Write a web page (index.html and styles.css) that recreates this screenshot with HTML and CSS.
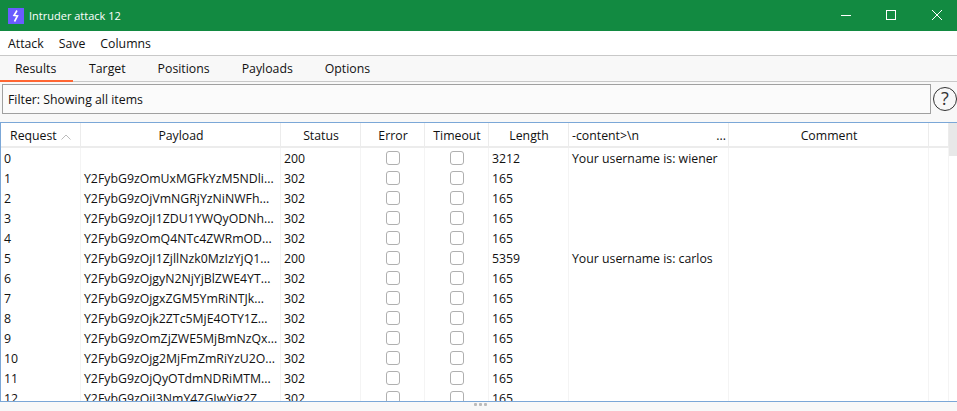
FILE: index.html
```html
<!DOCTYPE html>
<html lang="en">

<head>
    <meta charset="UTF-8">
    <meta name="viewport" content="width=device-width, initial-scale=1.0">
    <title>Intruder attack 12</title>
    <link rel="stylesheet" href="styles.css">
</head>

<body>
    <div class="titlebar">
        <div class="title-left">
            <svg class="app-icon" width="16" height="16" viewBox="0 0 16 16">
                <rect width="16" height="16" fill="#6a5cff"></rect>
                <path d="M9 2.5 L6 7.5 L9.5 8 L6.5 13.5" fill="none" stroke="#fff" stroke-width="1.6"></path>
            </svg>
            <span>Intruder attack 12</span>
        </div>
        <div class="window-buttons">
            <svg width="10" height="10" viewBox="0 0 10 10"><path d="M0 5.5H10" stroke="#fff"></path></svg>
            <svg class="max" width="10" height="10" viewBox="0 0 10 10"><rect x="0.5" y="0.5" width="9" height="9" fill="none" stroke="#fff"></rect></svg>
            <svg width="10" height="10" viewBox="0 0 10 10"><path d="M0 0L10 10M10 0L0 10" stroke="#fff"></path></svg>
        </div>
    </div>

    <div class="menubar">
        <span>Attack</span>
        <span>Save</span>
        <span>Columns</span>
    </div>

    <div class="tabs">
        <div class="tab active">Results</div>
        <div class="tab">Target</div>
        <div class="tab">Positions</div>
        <div class="tab">Payloads</div>
        <div class="tab">Options</div>
    </div>

    <div class="filter-row">
        <div class="filter">Filter: Showing all items</div>
        <div class="help">?</div>
    </div>

    <div class="table-wrap">
        <div class="thumb"></div>
        <table>
            <colgroup>
                <col class="c-req">
                <col class="c-pay">
                <col class="c-status">
                <col class="c-check">
                <col class="c-check">
                <col class="c-len">
                <col class="c-match">
                <col class="c-comment">
                <col>
            </colgroup>
            <thead>
                <tr>
                    <th class="sorted">Request
                        <svg class="sort" width="10" height="6" viewBox="0 0 10 6"><path d="M0.5 5.5L5 1L9.5 5.5" fill="none" stroke="#bbb"></path></svg>
                    </th>
                    <th>Payload</th>
                    <th>Status</th>
                    <th>Error</th>
                    <th>Timeout</th>
                    <th>Length</th>
                    <th class="match-head"><span>-content&gt;\n</span><span class="dots">...</span></th>
                    <th>Comment</th>
                    <th></th>
                </tr>
            </thead>
            <tbody>
                <tr><td>0</td><td></td><td>200</td><td><i class="box"></i></td><td><i class="box"></i></td><td>3212</td><td>Your username is: wiener</td><td></td><td></td></tr>
                <tr><td>1</td><td>Y2FybG9zOmUxMGFkYzM5NDli...</td><td>302</td><td><i class="box"></i></td><td><i class="box"></i></td><td>165</td><td></td><td></td><td></td></tr>
                <tr><td>2</td><td>Y2FybG9zOjVmNGRjYzNiNWFh...</td><td>302</td><td><i class="box"></i></td><td><i class="box"></i></td><td>165</td><td></td><td></td><td></td></tr>
                <tr><td>3</td><td>Y2FybG9zOjI1ZDU1YWQyODNh...</td><td>302</td><td><i class="box"></i></td><td><i class="box"></i></td><td>165</td><td></td><td></td><td></td></tr>
                <tr><td>4</td><td>Y2FybG9zOmQ4NTc4ZWRmOD...</td><td>302</td><td><i class="box"></i></td><td><i class="box"></i></td><td>165</td><td></td><td></td><td></td></tr>
                <tr><td>5</td><td>Y2FybG9zOjI1ZjllNzk0MzIzYjQ1...</td><td>200</td><td><i class="box"></i></td><td><i class="box"></i></td><td>5359</td><td>Your username is: carlos</td><td></td><td></td></tr>
                <tr><td>6</td><td>Y2FybG9zOjgyN2NjYjBlZWE4YT...</td><td>302</td><td><i class="box"></i></td><td><i class="box"></i></td><td>165</td><td></td><td></td><td></td></tr>
                <tr><td>7</td><td>Y2FybG9zOjgxZGM5YmRiNTJk...</td><td>302</td><td><i class="box"></i></td><td><i class="box"></i></td><td>165</td><td></td><td></td><td></td></tr>
                <tr><td>8</td><td>Y2FybG9zOjk2ZTc5MjE4OTY1Z...</td><td>302</td><td><i class="box"></i></td><td><i class="box"></i></td><td>165</td><td></td><td></td><td></td></tr>
                <tr><td>9</td><td>Y2FybG9zOmZjZWE5MjBmNzQx...</td><td>302</td><td><i class="box"></i></td><td><i class="box"></i></td><td>165</td><td></td><td></td><td></td></tr>
                <tr><td>10</td><td>Y2FybG9zOjg2MjFmZmRiYzU2O...</td><td>302</td><td><i class="box"></i></td><td><i class="box"></i></td><td>165</td><td></td><td></td><td></td></tr>
                <tr><td>11</td><td>Y2FybG9zOjQyOTdmNDRiMTM...</td><td>302</td><td><i class="box"></i></td><td><i class="box"></i></td><td>165</td><td></td><td></td><td></td></tr>
                <tr><td>12</td><td>Y2FybG9zOjI3NmY4ZGIwYjg2Z...</td><td>302</td><td><i class="box"></i></td><td><i class="box"></i></td><td>165</td><td></td><td></td><td></td></tr>
            </tbody>
        </table>
    </div>

    <div class="bottom">
        <div class="grip"><i></i><i></i><i></i></div>
    </div>
</body>

</html>
```

FILE: styles.css
```css
html,
body {
    margin: 0;
    padding: 0;
    height: 411px;
    overflow: hidden;
}

body {
    font-family: "Open Sans", "Noto Sans", sans-serif;
    font-size: 12.3px;
    color: #111;
    background-color: #f8f8f8;
}

.titlebar {
    height: 31px;
    background-color: #128a41;
    color: #fff;
    display: flex;
    align-items: center;
    justify-content: space-between;
}

.title-left {
    display: flex;
    align-items: center;
    gap: 5px;
    padding-left: 8px;
    font-size: 11px;
}

.app-icon {
    display: block;
}

.window-buttons {
    display: flex;
    gap: 35px;
    padding-right: 15px;
    margin-bottom: 1px;
    align-items: center;
}

.window-buttons svg {
    display: block;
    width: 10px;
    height: 10px;
}

.window-buttons .max {
    margin-right: 1px;
}

.menubar {
    height: 24px;
    background-color: #fff;
    border-bottom: 1px solid #c8c8c8;
    display: flex;
    align-items: center;
    gap: 15px;
    padding-left: 8px;
}

.tabs {
    height: 25px;
    border-bottom: 1px solid #c8c8c8;
    display: flex;
}

.tab {
    padding: 0 16px;
    line-height: 25px;
    box-sizing: border-box;
}

.tab.active {
    width: 73px;
    padding: 0 0 0 15px;
    border-bottom: 2px solid #ff6633;
    height: 26px;
}

.filter-row {
    display: flex;
    gap: 2px;
    padding: 2px 0 0 2px;
    height: 38px;
    box-sizing: border-box;
    align-items: flex-start;
}

.filter {
    width: 930px;
    height: 30px;
    box-sizing: border-box;
    border: 1px solid #a0a0a0;
    background-color: #fbfbfb;
    padding-left: 5px;
    line-height: 29px;
}

.help {
    width: 24px;
    height: 24px;
    flex: none;
    margin-top: 3px;
    border: 1.5px solid #333;
    border-radius: 50%;
    box-sizing: border-box;
    text-align: center;
    font-size: 18px;
    line-height: 21px;
    color: #333;
}

.table-wrap {
    position: relative;
    height: 280px;
    box-sizing: border-box;
    background-color: #fff;
    border-top: 1px solid #7ba7d7;
    border-bottom: 1px solid #7ba7d7;
    border-left: 1px solid #7ba7d7;
    margin-top: 2px;
    overflow: hidden;
}

.thumb {
    position: absolute;
    right: 0;
    top: 0;
    width: 8px;
    height: 33px;
    background-color: #e8e8e8;
}

table {
    border-collapse: separate;
    border-spacing: 0;
    table-layout: fixed;
    width: 948px;
}

.c-req {
    width: 80px;
}

.c-pay {
    width: 200px;
}

.c-status {
    width: 80px;
}

.c-check {
    width: 64px;
}

.c-len {
    width: 80px;
}

.c-match {
    width: 160px;
}

.c-comment {
    width: 200px;
}

th {
    height: 25px;
    padding: 1px 0 0 1px;
    font-weight: 400;
    text-align: center;
    background-color: #fff;
    border-bottom: 2px solid #ececec;
    border-right: 1px solid #ececec;
    box-sizing: border-box;
    white-space: nowrap;
}

.sorted {
    padding-left: 0;
}

.sort {
    margin-left: 1px;
}

.match-head {
    text-align: left;
    padding: 1px 1px 0 3px;
}

.match-head span {
    display: inline-block;
}

.match-head .dots {
    float: right;
    margin-right: 1px;
}

td {
    height: 20px;
    padding: 2px 0 0 3px;
    border-right: 1px solid #f4f4f4;
    box-sizing: border-box;
    white-space: nowrap;
    overflow: hidden;
    line-height: 18px;
}

td:nth-child(4),
td:nth-child(5) {
    padding: 0 0 0 1px;
}

.box {
    display: block;
    width: 14px;
    height: 14px;
    margin: 0 auto;
    border: 1px solid #b0b0b0;
    border-radius: 3px;
    box-sizing: border-box;
    background-color: #fff;
}

.bottom {
    height: 9px;
    display: flex;
    justify-content: center;
    padding: 1px 0 0 4px;
    box-sizing: border-box;
}

.grip {
    display: flex;
    gap: 2px;
    height: 3px;
}

.grip i {
    width: 3px;
    height: 3px;
    border-radius: 1px;
    background-color: #bbb;
}
```
